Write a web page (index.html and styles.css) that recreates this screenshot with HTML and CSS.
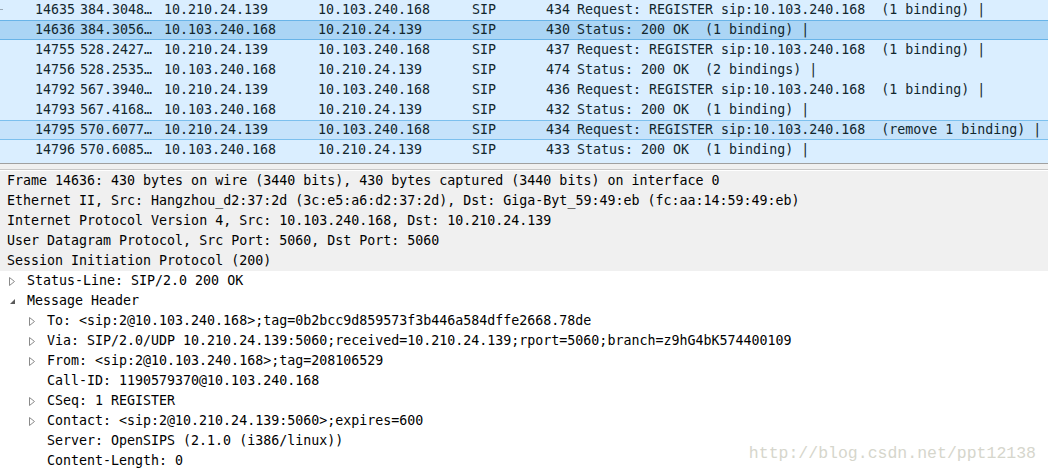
FILE: index.html
```html
<!DOCTYPE html>
<html>
<head>
<meta charset="utf-8">
<link rel="stylesheet" href="styles.css">
</head>
<body>
<div class="app">
  <div class="list">
    <div class="row"><span class="c0"><span class="rel"></span></span><span class="cno">14635</span><span class="ct">384.3048…</span><span class="cs">10.210.24.139</span><span class="cd">10.103.240.168</span><span class="cp">SIP</span><span class="cl">434</span><span class="ci">Request: REGISTER sip:10.103.240.168  (1 binding) |</span></div>
    <div class="row sel"><span class="c0"></span><span class="cno">14636</span><span class="ct">384.3056…</span><span class="cs">10.103.240.168</span><span class="cd">10.210.24.139</span><span class="cp">SIP</span><span class="cl">430</span><span class="ci">Status: 200 OK  (1 binding) |</span></div>
    <div class="row"><span class="c0"></span><span class="cno">14755</span><span class="ct">528.2427…</span><span class="cs">10.210.24.139</span><span class="cd">10.103.240.168</span><span class="cp">SIP</span><span class="cl">437</span><span class="ci">Request: REGISTER sip:10.103.240.168  (1 binding) |</span></div>
    <div class="row"><span class="c0"></span><span class="cno">14756</span><span class="ct">528.2535…</span><span class="cs">10.103.240.168</span><span class="cd">10.210.24.139</span><span class="cp">SIP</span><span class="cl">474</span><span class="ci">Status: 200 OK  (2 bindings) |</span></div>
    <div class="row"><span class="c0"></span><span class="cno">14792</span><span class="ct">567.3940…</span><span class="cs">10.210.24.139</span><span class="cd">10.103.240.168</span><span class="cp">SIP</span><span class="cl">436</span><span class="ci">Request: REGISTER sip:10.103.240.168  (1 binding) |</span></div>
    <div class="row"><span class="c0"></span><span class="cno">14793</span><span class="ct">567.4168…</span><span class="cs">10.103.240.168</span><span class="cd">10.210.24.139</span><span class="cp">SIP</span><span class="cl">432</span><span class="ci">Status: 200 OK  (1 binding) |</span></div>
    <div class="row hov"><span class="c0"></span><span class="cno">14795</span><span class="ct">570.6077…</span><span class="cs">10.210.24.139</span><span class="cd">10.103.240.168</span><span class="cp">SIP</span><span class="cl">434</span><span class="ci">Request: REGISTER sip:10.103.240.168  (remove 1 binding) |</span></div>
    <div class="row"><span class="c0"></span><span class="cno">14796</span><span class="ct">570.6085…</span><span class="cs">10.103.240.168</span><span class="cd">10.210.24.139</span><span class="cp">SIP</span><span class="cl">433</span><span class="ci">Status: 200 OK  (1 binding) |</span></div>
  </div>
  <div class="splitter"></div>
  <div class="tree">
    <div class="node top"><span class="txt">Frame 14636: 430 bytes on wire (3440 bits), 430 bytes captured (3440 bits) on interface 0</span></div>
    <div class="node top"><span class="txt">Ethernet II, Src: Hangzhou_d2:37:2d (3c:e5:a6:d2:37:2d), Dst: Giga-Byt_59:49:eb (fc:aa:14:59:49:eb)</span></div>
    <div class="node top"><span class="txt">Internet Protocol Version 4, Src: 10.103.240.168, Dst: 10.210.24.139</span></div>
    <div class="node top"><span class="txt">User Datagram Protocol, Src Port: 5060, Dst Port: 5060</span></div>
    <div class="node top"><span class="txt">Session Initiation Protocol (200)</span></div>
    <div class="node l1"><span class="tw"><svg width="9" height="9" viewBox="0 0 9 9"><polygon points="1.5,0.5 6.5,4.5 1.5,8.5" fill="none" stroke="#8a8a8a" stroke-width="1"/></svg></span><span class="txt">Status-Line: SIP/2.0 200 OK</span></div>
    <div class="node l1"><span class="tw"><svg width="9" height="9" viewBox="0 0 9 9"><polygon points="7,2 7,7 2,7" fill="#5a5a5a"/></svg></span><span class="txt">Message Header</span></div>
    <div class="node l2"><span class="tw"><svg width="9" height="9" viewBox="0 0 9 9"><polygon points="1.5,0.5 6.5,4.5 1.5,8.5" fill="none" stroke="#8a8a8a" stroke-width="1"/></svg></span><span class="txt">To: &lt;sip:2@10.103.240.168&gt;;tag=0b2bcc9d859573f3b446a584dffe2668.78de</span></div>
    <div class="node l2"><span class="tw"><svg width="9" height="9" viewBox="0 0 9 9"><polygon points="1.5,0.5 6.5,4.5 1.5,8.5" fill="none" stroke="#8a8a8a" stroke-width="1"/></svg></span><span class="txt">Via: SIP/2.0/UDP 10.210.24.139:5060;received=10.210.24.139;rport=5060;branch=z9hG4bK574400109</span></div>
    <div class="node l2"><span class="tw"><svg width="9" height="9" viewBox="0 0 9 9"><polygon points="1.5,0.5 6.5,4.5 1.5,8.5" fill="none" stroke="#8a8a8a" stroke-width="1"/></svg></span><span class="txt">From: &lt;sip:2@10.103.240.168&gt;;tag=208106529</span></div>
    <div class="node l2"><span class="tw"></span><span class="txt">Call-ID: 1190579370@10.103.240.168</span></div>
    <div class="node l2"><span class="tw"><svg width="9" height="9" viewBox="0 0 9 9"><polygon points="1.5,0.5 6.5,4.5 1.5,8.5" fill="none" stroke="#8a8a8a" stroke-width="1"/></svg></span><span class="txt">CSeq: 1 REGISTER</span></div>
    <div class="node l2"><span class="tw"><svg width="9" height="9" viewBox="0 0 9 9"><polygon points="1.5,0.5 6.5,4.5 1.5,8.5" fill="none" stroke="#8a8a8a" stroke-width="1"/></svg></span><span class="txt">Contact: &lt;sip:2@10.210.24.139:5060&gt;;expires=600</span></div>
    <div class="node l2"><span class="tw"></span><span class="txt">Server: OpenSIPS (2.1.0 (i386/linux))</span></div>
    <div class="node l2"><span class="tw"></span><span class="txt">Content-Length: 0</span></div>
  </div>
  <div class="watermark">http://blog.csdn.net/ppt12138</div>
</div>
</body>
</html>
```

FILE: styles.css
```css
html, body {
  margin: 0;
  padding: 0;
  background: #ffffff;
}
.app {
  position: relative;
  width: 1048px;
  height: 473px;
  overflow: hidden;
  font-family: "DejaVu Sans Mono", "Liberation Mono", monospace;
  font-size: 13.3px;
}
.list {
  height: 163px;
  background: #daeeff;
  border-bottom: 1px solid #a0a0a0;
  color: #12272e;
}
.row {
  display: grid;
  grid-template-columns: 35px 45px 84px 154px 154px 74px 31px 1fr;
  height: 20px;
  box-sizing: border-box;
  border-top: 1px solid transparent;
  border-bottom: 1px solid transparent;
  line-height: 18px;
}
.row span {
  overflow: hidden;
  white-space: pre;
}
.row.sel {
  background: #abd5f5;
  border-top-color: #69b4e8;
  border-bottom-color: #69b4e8;
}
.row.hov {
  background: #c6e3fb;
  border-top-color: #7cc0ee;
  border-bottom-color: #7cc0ee;
}
.rel {
  display: block;
  margin-top: 8px;
  width: 3px;
  height: 1px;
  background: #9aa8b4;
}
.splitter {
  height: 5px;
  background: #f0f0f0;
}
.tree {
  border-top: 1px solid #c8c8c8;
  padding-top: 1px;
  color: #000000;
}
.node {
  display: flex;
  align-items: center;
  height: 20px;
  line-height: 20px;
}
.txt { white-space: pre; }
.node.top {
  background: #f0f0f0;
  padding-left: 7px;
}
.node.l1 { padding-left: 7px; }
.node.l2 { padding-left: 27px; }
.tw {
  width: 20px;
  height: 20px;
  display: flex;
  align-items: center;
  padding-left: 1px;
  box-sizing: border-box;
}
.tw svg { display: block; }
.watermark {
  position: absolute;
  right: 12px;
  bottom: 10px;
  font-family: "Liberation Mono", monospace;
  font-size: 16.5px;
  color: #d6d6cc;
  white-space: pre;
}
```
